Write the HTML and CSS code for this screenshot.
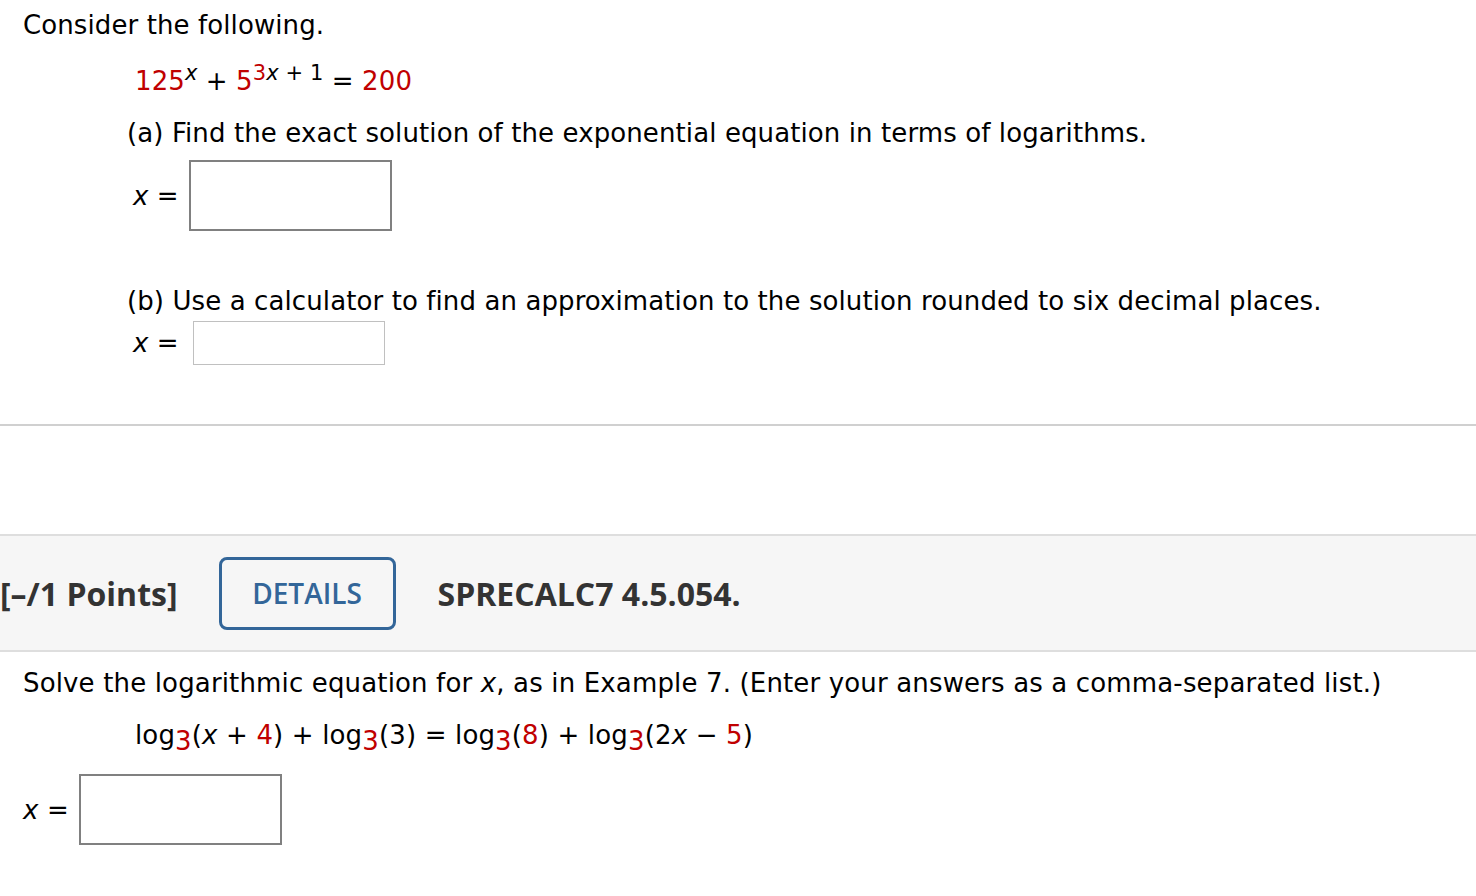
FILE: index.html
```html
<!DOCTYPE html>
<html>
<head>
<meta charset="utf-8">
<link rel="stylesheet" href="styles.css">
</head>
<body>
<div class="q1">
  <p class="intro">Consider the following.</p>
  <div class="eq1"><span class="red">125</span><sup><i>x</i></sup> + <span class="red">5</span><sup><span class="red">3</span><i>x</i> + 1</sup> = <span class="red">200</span></div>
  <div class="part">
    <p class="ptext">(a) Find the exact solution of the exponential equation in terms of logarithms.</p>
    <div class="ansrow"><span class="xeq"><i>x</i> =</span><span class="box big"></span></div>
  </div>
  <div class="part partb">
    <p class="ptext">(b) Use a calculator to find an approximation to the solution rounded to six decimal places.</p>
    <div class="ansrow"><span class="xeq"><i>x</i> =</span><span class="box small"></span></div>
  </div>
</div>
<div class="gap"></div>
<div class="qhead">
  <span class="pts">[–/1 Points]</span>
  <span class="details">DETAILS</span>
  <span class="qid">SPRECALC7 4.5.054.</span>
</div>
<div class="q2">
  <p class="intro2">Solve the logarithmic equation for <i>x</i>, as in Example 7. (Enter your answers as a comma-separated list.)</p>
  <div class="eq2">log<sub class="red">3</sub>(<i>x</i> + <span class="red">4</span>) + log<sub class="red">3</sub>(3) = log<sub class="red">3</sub>(<span class="red">8</span>) + log<sub class="red">3</sub>(2<i>x</i> − <span class="red">5</span>)</div>
  <div class="ansrow2"><span class="xeq2"><i>x</i> =</span><span class="box big"></span></div>
</div>
</body>
</html>
```
FILE: styles.css
```css
html, body { margin: 0; padding: 0; background: #fff; }
body { font-family: "DejaVu Sans", Verdana, sans-serif; font-size: 26px; color: #000; width: 1476px; overflow: hidden; }
p { margin: 0; }
.red { color: #c00000; }
.q1 { padding: 9px 0 0 23px; border-bottom: 2px solid #d0d0d0; height: 426px; box-sizing: border-box; letter-spacing: 0.1px; }
.intro { line-height: 32px; }
.eq1 { margin: 24px 0 0 112px; line-height: 32px; }
.eq1 sup { font-size: 21px; vertical-align: 10px; line-height: 0; }
.part { margin: 19px 0 0 104px; }
.ptext { line-height: 34px; }
.ansrow { display: flex; align-items: center; margin-top: 10px; }
.xeq { display: inline-block; width: 62px; padding-left: 6px; box-sizing: border-box; }
.box { display: inline-block; box-sizing: border-box; background: #fff; }
.box.big { width: 203px; height: 71px; border: 2px solid #808080; }
.box.small { width: 192px; height: 44px; border: 1px solid #c0c0c0; margin-left: 4px; }
.partb { margin-top: 53px; }
.partb .ansrow { margin-top: 3px; }
.gap { height: 108px; }
.qhead { display: flex; align-items: center; height: 118px; box-sizing: border-box; background: #f6f6f6; border-top: 2px solid #dedede; border-bottom: 2px solid #dedede; font-family: "Open Sans", sans-serif; font-weight: 700; color: #333; }
.pts { font-size: 32px; }
.details { margin-left: 41px; width: 177px; height: 73px; box-sizing: border-box; border: 3px solid #336699; border-radius: 8px; display: flex; align-items: center; justify-content: center; color: #336699; font-weight: 600; font-size: 28px; }
.qid { margin-left: 42px; font-size: 32px; }
.q2 { padding: 14px 0 0 23px; letter-spacing: 0.15px; }
.intro2 { line-height: 34px; }
.eq2 { margin: 18px 0 0 112px; line-height: 34px; }
.eq2 sub { font-size: 26px; vertical-align: -6px; line-height: 0; }
.ansrow2 { display: flex; align-items: center; margin-top: 22px; }
.xeq2 { width: 56px; }
```
